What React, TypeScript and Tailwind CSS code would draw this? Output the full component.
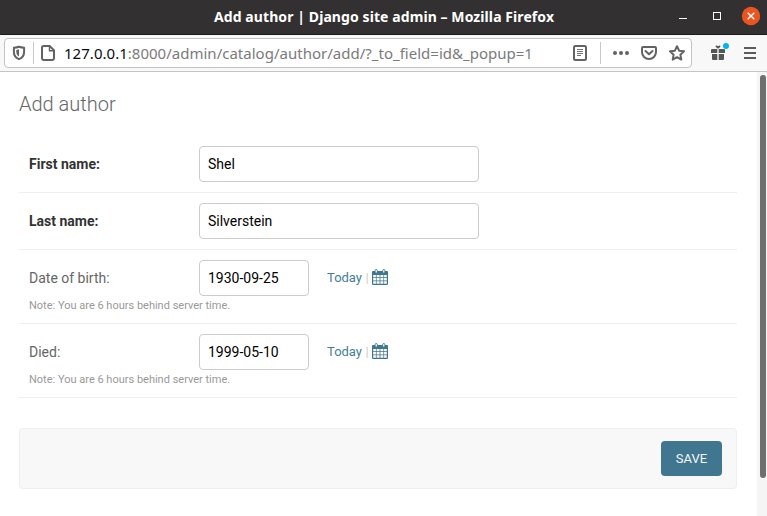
import React from "react";

function CalendarIcon() {
  return (
    <svg width="16" height="18" viewBox="0 0 16 18" className="ml-[3px] block">
      <path d="M1 2h14a1 1 0 0 1 1 1v12a1 1 0 0 1-1 1H1a1 1 0 0 1-1-1V3a1 1 0 0 1 1-1z" fill="#417690" />
      <path d="M1.2 5.9h2.7v2.2H1.2zM4.6 5.9h3v2.2h-3zM8.4 5.9h3v2.2h-3zM12.1 5.9h2.7v2.2h-2.7zM1.2 8.8h2.7v2.7H1.2zM4.6 8.8h3v2.7h-3zM8.4 8.8h3v2.7h-3zM12.1 8.8h2.7v2.7h-2.7zM1.2 12.2h2.7v2.6H1.2zM4.6 12.2h3v2.6h-3zM8.4 12.2h3v2.6h-3zM12.1 12.2h2.7v2.6h-2.7z" fill="#fff" />
      <rect x="3.1" y=".5" width="2.2" height="3.7" rx="1.1" fill="#fff" stroke="#417690" strokeWidth=".9" />
      <rect x="10.7" y=".5" width="2.2" height="3.7" rx="1.1" fill="#fff" stroke="#417690" strokeWidth=".9" />
    </svg>
  );
}

function TitleBar() {
  return (
    <header className="flex h-[35px] shrink-0 items-center border-b border-[#1c1a1b] bg-[#333031] font-['Noto_Sans',sans-serif] text-white">
      <h1 className="ml-[214px] w-[345px] whitespace-nowrap text-[14px] leading-5 font-bold tracking-[0.085px]">
        Add author | Django site admin – Mozilla Firefox
      </h1>
      <svg width="97" height="34" viewBox="670 0 97 34" className="ml-auto">
        <path d="M679 18.5h8" stroke="#fff" />
        <rect x="713.5" y="12.5" width="7" height="7" fill="none" stroke="#fff" />
        <circle cx="751" cy="16" r="9.2" fill="#e95420" />
        <path d="M747.7 12.7l6.6 6.6M754.3 12.7l-6.6 6.6" stroke="#fff" strokeWidth="1.4" />
      </svg>
    </header>
  );
}

function Toolbar() {
  return (
    <div className="flex h-[37px] shrink-0 items-center border-b border-[#c4c4c4] bg-[#f8f8f8] pl-1">
      <div className="flex h-[30px] w-[688px] items-center rounded-[4px] border border-[#c3c3c3] bg-white">
        <svg width="58" height="28" viewBox="5 39 58 28" className="shrink-0" fill="none" stroke="#636363">
          <path d="M19 46.7c1.8.7 3.4.9 5.1 1V52c0 3.6-2 5.9-5.1 7.2-3.1-1.3-5.1-3.6-5.1-7.2v-4.3c1.7-.1 3.3-.3 5.1-1z" strokeWidth="2" strokeLinejoin="round" />
          <path d="M19 49.3v7.3c-1.6-.9-2.7-2.4-2.7-4.6v-2.1z" fill="#636363" stroke="none" />
          <path d="M33.5 42v22" stroke="#c8c8c8" />
          <path d="M43.8 46h5.9l4.3 4.4v7.8a1.8 1.8 0 0 1-1.8 1.8h-8.4a1.8 1.8 0 0 1-1.8-1.8V47.8A1.8 1.8 0 0 1 43.8 46z" strokeWidth="2" />
          <path d="M49.5 46v4.8h4.7" strokeWidth="1.4" />
        </svg>
        <div className="w-[480px] whitespace-nowrap pl-px font-['Noto_Sans',sans-serif] text-[15px] leading-5 text-[#7b7b7b]">
          <span className="tracking-[0.03px] text-[#0c0c0d]">127.0.0.1</span>
          <span className="tracking-[0.01px]">:8000/admin/catalog/author/add/?_to_field=id&amp;_popup=1</span>
        </div>
        <svg width="122" height="28" viewBox="569 39 122 28" className="ml-auto shrink-0" fill="none" stroke="#636363">
          <rect x="574" y="46" width="12" height="14" rx="1.5" strokeWidth="2" />
          <path d="M577 49.5h6M577 51.5h6M577 53.5h6M577 55.5h4" strokeWidth=".9" />
          <path d="M600.5 42v22" stroke="#c8c8c8" />
          <g fill="#636363" stroke="none">
            <circle cx="615" cy="53" r="2" />
            <circle cx="621" cy="53" r="2" />
            <circle cx="627" cy="53" r="2" />
          </g>
          <path d="M643 47h12a1 1 0 0 1 1 1v4a7 7 0 0 1-14 0v-4a1 1 0 0 1 1-1z" strokeWidth="2" />
          <path d="M645.5 51l3.5 3.3 3.5-3.3" strokeWidth="2" strokeLinecap="round" strokeLinejoin="round" />
          <path d="M677 46.2l2.1 4.5 4.9.6-3.6 3.4.9 4.9-4.3-2.4-4.3 2.4.9-4.9-3.6-3.4 4.9-.6z" strokeWidth="2" strokeLinejoin="round" />
        </svg>
      </div>
      <svg width="75" height="36" viewBox="692 35 75 36" className="shrink-0">
        <path d="M712 49h5.3v4H711v-3a1 1 0 0 1 1-1zM718.7 49h5.3a1 1 0 0 1 1 1v3h-6.3zM712 54h5.3v6H713a1 1 0 0 1-1-1zM718.7 54h5.3v5a1 1 0 0 1-1 1h-4.3z" fill="#555" />
        <path d="M718 48.8l-2.2-1.7c-.6-.9.1-1.9 1-1.6l1.2.8 1.2-.8c.9-.3 1.6.7 1 1.6z" fill="#555" />
        <circle cx="726" cy="46" r="3" fill="#00b3f4" />
        <path d="M744 48h12M744 53h12M744 58h12" stroke="#5b5b5b" strokeWidth="2" />
      </svg>
    </div>
  );
}

function TextRow({ label, value }: { label: string; value: string }) {
  return (
    <div className="flex items-center border-b border-[#eee] px-2.5 py-2.5 text-[14px]">
      <label className="w-[170px] text-[14px] font-bold text-[#333]">{label}</label>
      <input defaultValue={value} className="h-9 w-[280px] rounded-[4px] border border-[#ccc] bg-white px-2 text-black outline-none" />
    </div>
  );
}

function DateRow({ label, value }: { label: string; value: string }) {
  return (
    <div className="h-[74px] border-b border-[#eee] px-2.5 pt-2.5">
      <div className="flex items-center">
        <label className="w-[170px] text-[14px] text-[#666]">{label}</label>
        <input defaultValue={value} className="h-9 w-[110px] rounded-[4px] border border-[#ccc] bg-white px-2 text-[14px] text-black outline-none" />
        <div className="ml-[18px] flex items-center text-[13px] leading-4">
          <a className="text-[#447e9b]">Today</a>
          <span className="ml-[3.4px] text-[#ccc]">|</span>
          <CalendarIcon />
        </div>
      </div>
      <p className="mt-px text-[11px] leading-[17px] text-[#999]">Note: You are 6 hours behind server time.</p>
    </div>
  );
}

export default function App() {
  return (
    <div className="flex h-[516px] w-[767px] flex-col overflow-hidden bg-white font-[Roboto,sans-serif]">
      <TitleBar />
      <Toolbar />
      <div className="flex min-h-0 flex-1">
        <main className="flex-1 pr-5 pl-[19px]">
          <h2 className="mt-5 mb-5 text-[20px] leading-6 font-light text-[#666]">Add author</h2>
          <form>
            <TextRow label="First name:" value="Shel" />
            <TextRow label="Last name:" value="Silverstein" />
            <DateRow label="Date of birth:" value="1930-09-25" />
            <DateRow label="Died:" value="1999-05-10" />
            <div className="mt-[30px] flex h-[61px] items-center justify-end rounded-[4px] border border-[#eee] bg-[#f8f8f8] pr-[14px]">
              <button type="button" className="h-[35px] w-[61px] rounded-[4px] bg-[#417690] text-[13px] text-[#f4f8fa]">SAVE</button>
            </div>
          </form>
        </main>
        <div className="w-[10px] bg-[#f5f5f5] pt-[3px] pl-[3px]">
          <div className="h-[403px] w-[6px] rounded-full bg-[#6e6e6e]" />
        </div>
      </div>
    </div>
  );
}
